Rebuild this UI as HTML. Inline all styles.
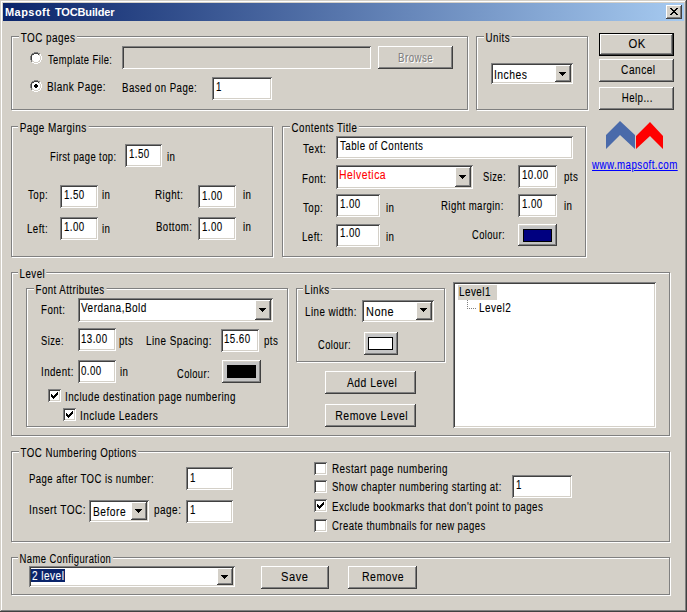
<!DOCTYPE html>
<html><head><meta charset="utf-8"><style>*{margin:0;padding:0;box-sizing:border-box}
html,body{width:687px;height:612px;overflow:hidden}
body{background:#D4D0C8;position:relative;font-family:"Liberation Sans",sans-serif;font-size:12px;color:#000}
.a{position:absolute}
.t{position:absolute;white-space:nowrap;line-height:13px;font-size:12px;transform-origin:0 0;letter-spacing:0.55px;-webkit-text-stroke-width:0.1px}
.c{position:absolute;white-space:nowrap;line-height:13px;font-size:12px;text-align:center}
.c span{display:inline-block;transform:scaleX(0.8099);transform-origin:50% 0;letter-spacing:0.55px;-webkit-text-stroke-width:0.1px}
.tb{position:absolute;white-space:nowrap;line-height:13px;font-size:11px;font-weight:bold;color:#fff;letter-spacing:0.15px}
.grp{position:absolute;border:1px solid #808080;box-shadow:inset 1px 1px 0 #fff,1px 1px 0 #fff}
.gl{position:absolute;background:#D4D0C8;padding:0 2px;line-height:13px;white-space:nowrap;font-size:12px;transform-origin:0 0;letter-spacing:0.55px;-webkit-text-stroke-width:0.1px}
.edit{position:absolute;background:#fff;box-shadow:inset 1px 1px 0 #808080,inset -1px -1px 0 #fff,inset 2px 2px 0 #404040,inset -2px -2px 0 #D4D0C8}
.btn{position:absolute;background:#D4D0C8;box-shadow:inset -1px -1px 0 #404040,inset 1px 1px 0 #fff,inset -2px -2px 0 #808080,inset 2px 2px 0 #D4D0C8}
.btn.def{box-shadow:inset 0 0 0 1px #000,inset -2px -2px 0 #404040,inset 2px 2px 0 #fff,inset -3px -3px 0 #808080}
.chk{position:absolute;background:#fff;box-shadow:inset 1px 1px 0 #808080,inset -1px -1px 0 #fff,inset 2px 2px 0 #404040,inset -2px -2px 0 #D4D0C8}
</style></head><body>
<div class="a" style="left:0;top:0;width:687px;height:612px;box-shadow:inset -1px -1px 0 #404040,inset 1px 1px 0 #D4D0C8,inset -2px -2px 0 #808080,inset 2px 2px 0 #fff"></div>
<div class="a" style="left:3px;top:3px;width:681px;height:18px;background:linear-gradient(to right,#0A246A,#A6CAF0)"></div>
<div class="tb" style="left:5px;top:6px;letter-spacing:0.45px">Mapsoft</div>
<div class="tb" style="left:55px;top:6px;letter-spacing:-0.15px">TOCBuilder</div>
<div class="btn" style="left:666px;top:5px;width:16px;height:14px;"></div>
<svg class="a" style="left:670px;top:8px" width="8" height="7" shape-rendering="crispEdges"><path d="M0 0h2v1h1v1h2v-1h1v-1h2v1h-1v1h-1v1h-1v1h1v1h1v1h1v1h-2v-1h-1v-1h-2v1h-1v1h-2v-1h1v-1h1v-1h1v-1h-1v-1h-1v-1h-1z" fill="#000"/></svg>
<div class="grp" style="left:11px;top:36px;width:457px;height:74px"></div>
<div class="gl" style="left:19px;top:32px;transform:scaleX(0.8281);">TOC pages</div>
<svg class="a" style="left:30px;top:52px" width="12" height="12" shape-rendering="crispEdges"><path d="M4 2h4v1h1v1h1v4h-1v1h-1v1h-4v-1h-1v-1h-1v-4h1v-1h1z" fill="#fff"/><path d="M4 0h4v1h-4zM2 1h2v1h-2zM8 1h2v1h-2zM1 2h1v2h-1zM0 4h1v4h-1zM1 8h1v2h-1z" fill="#808080"/><path d="M4 1h4v1h-4zM2 2h2v1h-2zM8 2h2v1h-2zM1 3h1v1h-1zM1 4h1v4h-1z" fill="#404040"/><path d="M10 2h1v2h-1zM11 4h1v4h-1zM10 8h1v2h-1zM8 10h2v1h-2zM4 11h4v1h-4zM2 10h2v1h-2z" fill="#fff"/><path d="M10 4h1v4h-1zM9 8h1v1h-1zM8 9h1v1h-1zM4 10h4v1h-4zM2 9h1v1h-1zM9 2h1v1h-1zM3 9h1v1h-1z" fill="#D4D0C8"/></svg>
<div class="t" style="left:48px;top:54px;transform:scaleX(0.7817);">Template File:</div>
<div class="edit" style="left:122px;top:46px;width:249px;height:23px;background:#D4D0C8"></div>
<div class="btn" style="left:378px;top:46px;width:75px;height:23px;"></div>
<div class="c" style="left:379px;top:53px;width:75px;color:#fff"><span style="transform:scaleX(0.8099);">Browse</span></div>
<div class="c" style="left:378px;top:52px;width:75px;color:#808080"><span style="transform:scaleX(0.8099);">Browse</span></div>
<svg class="a" style="left:30px;top:80px" width="12" height="12" shape-rendering="crispEdges"><path d="M4 2h4v1h1v1h1v4h-1v1h-1v1h-4v-1h-1v-1h-1v-4h1v-1h1z" fill="#fff"/><path d="M4 0h4v1h-4zM2 1h2v1h-2zM8 1h2v1h-2zM1 2h1v2h-1zM0 4h1v4h-1zM1 8h1v2h-1z" fill="#808080"/><path d="M4 1h4v1h-4zM2 2h2v1h-2zM8 2h2v1h-2zM1 3h1v1h-1zM1 4h1v4h-1z" fill="#404040"/><path d="M10 2h1v2h-1zM11 4h1v4h-1zM10 8h1v2h-1zM8 10h2v1h-2zM4 11h4v1h-4zM2 10h2v1h-2z" fill="#fff"/><path d="M10 4h1v4h-1zM9 8h1v1h-1zM8 9h1v1h-1zM4 10h4v1h-4zM2 9h1v1h-1zM9 2h1v1h-1zM3 9h1v1h-1z" fill="#D4D0C8"/><path d="M5 4h2v1h1v2h-1v1h-2v-1h-1v-2h1z" fill="#000"/></svg>
<div class="t" style="left:47px;top:81px;transform:scaleX(0.8327);">Blank Page:</div>
<div class="t" style="left:122px;top:82px;transform:scaleX(0.8081);">Based on Page:</div>
<div class="edit" style="left:212px;top:77px;width:60px;height:23px;"></div>
<div class="t" style="left:216px;top:81px;transform:scaleX(0.8099);">1</div>
<div class="grp" style="left:476px;top:36px;width:112px;height:74px"></div>
<div class="gl" style="left:484px;top:32px;transform:scaleX(0.8099);">Units</div>
<div class="edit" style="left:491px;top:63px;width:82px;height:21px;"></div>
<div class="btn" style="left:555px;top:65px;width:16px;height:17px;"></div>
<svg class="a" style="left:559px;top:72px" width="7" height="4" shape-rendering="crispEdges"><path d="M0 0h7v1h-1v1h-1v1h-1v1h-1v-1h-1v-1h-1v-1h-1z" fill="#000"/></svg>
<div class="t" style="left:494px;top:69px;transform:scaleX(0.8645);">Inches</div>
<div class="btn def" style="left:599px;top:33px;width:75px;height:23px;"></div>
<div class="c" style="left:600px;top:38px;width:75px;"><span style="transform:scaleX(0.9373);">OK</span></div>
<div class="btn" style="left:599px;top:59px;width:75px;height:23px;"></div>
<div class="c" style="left:601px;top:64px;width:75px;"><span style="transform:scaleX(0.8463);">Cancel</span></div>
<div class="btn" style="left:599px;top:87px;width:75px;height:23px;"></div>
<div class="c" style="left:600px;top:92px;width:75px;"><span style="transform:scaleX(0.8099);">Help...</span></div>
<svg class="a" style="left:600px;top:118px" width="70" height="36"><polygon points="6,17 20,3 35,17 35,31 20,17 6,31" fill="#4A6AAA"/><polygon points="36,18 50,4 63,18 63,31 50,18 36,31" fill="#FF0000"/></svg>
<div class="t" style="left:592px;top:159px;color:#0000FF;transform:scaleX(0.8117)"><u>www.mapsoft.com</u></div>
<div class="grp" style="left:11px;top:126px;width:262px;height:131px"></div>
<div class="gl" style="left:18px;top:122px;transform:scaleX(0.8317);">Page Margins</div>
<div class="t" style="left:50px;top:151px;transform:scaleX(0.7826);">First page top:</div>
<div class="edit" style="left:125px;top:144px;width:37px;height:23px;"></div>
<div class="t" style="left:129px;top:148px;transform:scaleX(0.8099);">1.50</div>
<div class="t" style="left:167px;top:151px;transform:scaleX(0.8099);">in</div>
<div class="t" style="left:28px;top:189px;transform:scaleX(0.8099);">Top:</div>
<div class="edit" style="left:60px;top:185px;width:38px;height:23px;"></div>
<div class="t" style="left:64px;top:189px;transform:scaleX(0.8099);">1.50</div>
<div class="t" style="left:102px;top:189px;transform:scaleX(0.8099);">in</div>
<div class="t" style="left:27px;top:223px;transform:scaleX(0.8099);">Left:</div>
<div class="edit" style="left:60px;top:217px;width:38px;height:23px;"></div>
<div class="t" style="left:64px;top:221px;transform:scaleX(0.8099);">1.00</div>
<div class="t" style="left:102px;top:223px;transform:scaleX(0.8099);">in</div>
<div class="t" style="left:155px;top:189px;transform:scaleX(0.8217);">Right:</div>
<div class="edit" style="left:198px;top:185px;width:38px;height:23px;"></div>
<div class="t" style="left:202px;top:190px;transform:scaleX(0.8099);">1.00</div>
<div class="t" style="left:243px;top:189px;transform:scaleX(0.8099);">in</div>
<div class="t" style="left:156px;top:221px;transform:scaleX(0.8026);">Bottom:</div>
<div class="edit" style="left:198px;top:217px;width:38px;height:23px;"></div>
<div class="t" style="left:202px;top:221px;transform:scaleX(0.8099);">1.00</div>
<div class="t" style="left:243px;top:221px;transform:scaleX(0.8099);">in</div>
<div class="grp" style="left:282px;top:126px;width:304px;height:131px"></div>
<div class="gl" style="left:290px;top:122px;transform:scaleX(0.8099);">Contents Title</div>
<div class="t" style="left:303px;top:143px;transform:scaleX(0.8263);">Text:</div>
<div class="edit" style="left:336px;top:136px;width:237px;height:23px;"></div>
<div class="t" style="left:340px;top:140px;transform:scaleX(0.8117);">Table of Contents</div>
<div class="t" style="left:302px;top:173px;transform:scaleX(0.8099);">Font:</div>
<div class="edit" style="left:336px;top:165px;width:137px;height:24px;"></div>
<div class="btn" style="left:455px;top:167px;width:16px;height:20px;"></div>
<svg class="a" style="left:459px;top:175px" width="7" height="4" shape-rendering="crispEdges"><path d="M0 0h7v1h-1v1h-1v1h-1v1h-1v-1h-1v-1h-1v-1h-1z" fill="#000"/></svg>
<div class="t" style="left:339px;top:169px;transform:scaleX(0.8672);color:#FF0000">Helvetica</div>
<div class="t" style="left:483px;top:171px;transform:scaleX(0.779);">Size:</div>
<div class="edit" style="left:518px;top:165px;width:39px;height:23px;"></div>
<div class="t" style="left:522px;top:169px;transform:scaleX(0.8099);">10.00</div>
<div class="t" style="left:564px;top:171px;transform:scaleX(0.8099);">pts</div>
<div class="t" style="left:303px;top:202px;transform:scaleX(0.8099);">Top:</div>
<div class="edit" style="left:336px;top:194px;width:44px;height:23px;"></div>
<div class="t" style="left:340px;top:198px;transform:scaleX(0.8099);">1.00</div>
<div class="t" style="left:386px;top:202px;transform:scaleX(0.8099);">in</div>
<div class="t" style="left:302px;top:231px;transform:scaleX(0.8099);">Left:</div>
<div class="edit" style="left:336px;top:224px;width:44px;height:23px;"></div>
<div class="t" style="left:340px;top:227px;transform:scaleX(0.8099);">1.00</div>
<div class="t" style="left:386px;top:231px;transform:scaleX(0.8099);">in</div>
<div class="t" style="left:441px;top:200px;transform:scaleX(0.799);">Right margin:</div>
<div class="edit" style="left:518px;top:194px;width:39px;height:23px;"></div>
<div class="t" style="left:522px;top:198px;transform:scaleX(0.8099);">1.00</div>
<div class="t" style="left:564px;top:200px;transform:scaleX(0.8099);">in</div>
<div class="t" style="left:472px;top:229px;transform:scaleX(0.7744);">Colour:</div>
<div class="btn" style="left:518px;top:224px;width:39px;height:22px;background:#C4C4C4"></div>
<div class="a" style="left:523px;top:229px;width:29px;height:13px;background:#000080;border:1px solid #000"></div>
<div class="grp" style="left:11px;top:272px;width:659px;height:164px"></div>
<div class="gl" style="left:18px;top:268px;transform:scaleX(0.8099);">Level</div>
<div class="grp" style="left:26px;top:288px;width:262px;height:139px"></div>
<div class="gl" style="left:34px;top:284px;transform:scaleX(0.8063);">Font Attributes</div>
<div class="t" style="left:41px;top:304px;transform:scaleX(0.8099);">Font:</div>
<div class="edit" style="left:78px;top:298px;width:195px;height:24px;"></div>
<div class="btn" style="left:255px;top:300px;width:16px;height:20px;"></div>
<svg class="a" style="left:259px;top:308px" width="7" height="4" shape-rendering="crispEdges"><path d="M0 0h7v1h-1v1h-1v1h-1v1h-1v-1h-1v-1h-1v-1h-1z" fill="#000"/></svg>
<div class="t" style="left:81px;top:302px;transform:scaleX(0.8372);">Verdana,Bold</div>
<div class="t" style="left:41px;top:335px;transform:scaleX(0.779);">Size:</div>
<div class="edit" style="left:78px;top:328px;width:38px;height:23px;"></div>
<div class="t" style="left:81px;top:333px;transform:scaleX(0.8099);">13.00</div>
<div class="t" style="left:119px;top:335px;transform:scaleX(0.8099);">pts</div>
<div class="t" style="left:146px;top:335px;transform:scaleX(0.8254);">Line Spacing:</div>
<div class="edit" style="left:221px;top:329px;width:38px;height:23px;"></div>
<div class="t" style="left:224px;top:333px;transform:scaleX(0.8099);">15.60</div>
<div class="t" style="left:264px;top:335px;transform:scaleX(0.8099);">pts</div>
<div class="t" style="left:41px;top:366px;transform:scaleX(0.8099);">Indent:</div>
<div class="edit" style="left:78px;top:360px;width:38px;height:23px;"></div>
<div class="t" style="left:81px;top:365px;transform:scaleX(0.8099);">0.00</div>
<div class="t" style="left:120px;top:366px;transform:scaleX(0.8099);">in</div>
<div class="t" style="left:177px;top:368px;transform:scaleX(0.7744);">Colour:</div>
<div class="btn" style="left:222px;top:360px;width:39px;height:23px;background:#C4C4C4"></div>
<div class="a" style="left:227px;top:365px;width:29px;height:13px;background:#000;border:1px solid #000"></div>
<div class="chk" style="left:48px;top:389px;width:13px;height:13px;"></div>
<svg class="a" style="left:48px;top:389px" width="13" height="13" shape-rendering="crispEdges"><path d="M9 3h1v1h-1zM8 4h1v1h-1zM9 4h1v1h-1zM3 5h1v1h-1zM7 5h1v1h-1zM8 5h1v1h-1zM9 5h1v1h-1zM3 6h1v1h-1zM4 6h1v1h-1zM6 6h1v1h-1zM7 6h1v1h-1zM8 6h1v1h-1zM3 7h1v1h-1zM4 7h1v1h-1zM5 7h1v1h-1zM6 7h1v1h-1zM7 7h1v1h-1zM4 8h1v1h-1zM5 8h1v1h-1zM6 8h1v1h-1zM5 9h1v1h-1z" fill="#000"/></svg>
<div class="t" style="left:65px;top:391px;transform:scaleX(0.8181);">Include destination page numbering</div>
<div class="chk" style="left:63px;top:408px;width:13px;height:13px;"></div>
<svg class="a" style="left:63px;top:408px" width="13" height="13" shape-rendering="crispEdges"><path d="M9 3h1v1h-1zM8 4h1v1h-1zM9 4h1v1h-1zM3 5h1v1h-1zM7 5h1v1h-1zM8 5h1v1h-1zM9 5h1v1h-1zM3 6h1v1h-1zM4 6h1v1h-1zM6 6h1v1h-1zM7 6h1v1h-1zM8 6h1v1h-1zM3 7h1v1h-1zM4 7h1v1h-1zM5 7h1v1h-1zM6 7h1v1h-1zM7 7h1v1h-1zM4 8h1v1h-1zM5 8h1v1h-1zM6 8h1v1h-1zM5 9h1v1h-1z" fill="#000"/></svg>
<div class="t" style="left:80px;top:410px;transform:scaleX(0.8354);">Include Leaders</div>
<div class="grp" style="left:296px;top:288px;width:149px;height:74px"></div>
<div class="gl" style="left:303px;top:284px;transform:scaleX(0.8099);">Links</div>
<div class="t" style="left:305px;top:306px;transform:scaleX(0.8172);">Line width:</div>
<div class="edit" style="left:362px;top:300px;width:72px;height:22px;"></div>
<div class="btn" style="left:416px;top:302px;width:16px;height:18px;"></div>
<svg class="a" style="left:420px;top:308px" width="7" height="4" shape-rendering="crispEdges"><path d="M0 0h7v1h-1v1h-1v1h-1v1h-1v-1h-1v-1h-1v-1h-1z" fill="#000"/></svg>
<div class="t" style="left:366px;top:306px;transform:scaleX(0.91);">None</div>
<div class="t" style="left:318px;top:339px;transform:scaleX(0.7744);">Colour:</div>
<div class="btn" style="left:364px;top:332px;width:34px;height:23px;background:#C4C4C4"></div>
<div class="a" style="left:368px;top:337px;width:25px;height:13px;background:#fff;border:1px solid #000"></div>
<div class="btn" style="left:325px;top:371px;width:91px;height:23px;"></div>
<div class="c" style="left:327px;top:377px;width:91px;"><span style="transform:scaleX(0.8645);">Add Level</span></div>
<div class="btn" style="left:325px;top:404px;width:91px;height:23px;"></div>
<div class="c" style="left:326px;top:410px;width:91px;"><span style="transform:scaleX(0.8736);">Remove Level</span></div>
<div class="edit" style="left:453px;top:282px;width:203px;height:146px;"></div>
<div class="a" style="left:458px;top:285px;width:39px;height:15px;background:#D4D0C8"></div>
<div class="t" style="left:459px;top:286px;transform:scaleX(0.8272);">Level1</div>
<svg class="a" style="left:467px;top:300px" width="10" height="10" shape-rendering="crispEdges"><path d="M0 0h1v1h-1zM0 2h1v1h-1zM0 4h1v1h-1zM0 6h1v1h-1zM0 8h1v1h-1zM2 8h1v1h-1zM4 8h1v1h-1zM6 8h1v1h-1zM8 8h1v1h-1z" fill="#808080"/></svg>
<div class="t" style="left:479px;top:302px;transform:scaleX(0.8327);">Level2</div>
<div class="grp" style="left:11px;top:451px;width:659px;height:91px"></div>
<div class="gl" style="left:19px;top:447px;transform:scaleX(0.8099);">TOC Numbering Options</div>
<div class="t" style="left:29px;top:473px;transform:scaleX(0.7981);">Page after TOC is number:</div>
<div class="edit" style="left:186px;top:467px;width:47px;height:23px;"></div>
<div class="t" style="left:190px;top:472px;transform:scaleX(0.8099);">1</div>
<div class="t" style="left:29px;top:504px;transform:scaleX(0.8445);">Insert TOC:</div>
<div class="edit" style="left:89px;top:500px;width:60px;height:22px;"></div>
<div class="btn" style="left:131px;top:502px;width:16px;height:18px;"></div>
<svg class="a" style="left:135px;top:509px" width="7" height="4" shape-rendering="crispEdges"><path d="M0 0h7v1h-1v1h-1v1h-1v1h-1v-1h-1v-1h-1v-1h-1z" fill="#000"/></svg>
<div class="t" style="left:93px;top:506px;transform:scaleX(0.8554);">Before</div>
<div class="t" style="left:154px;top:504px;transform:scaleX(0.8354);">page:</div>
<div class="edit" style="left:186px;top:500px;width:47px;height:23px;"></div>
<div class="t" style="left:190px;top:504px;transform:scaleX(0.8099);">1</div>
<div class="chk" style="left:314px;top:462px;width:13px;height:13px;"></div>
<div class="t" style="left:332px;top:463px;transform:scaleX(0.8226);">Restart page numbering</div>
<div class="chk" style="left:314px;top:480px;width:13px;height:13px;"></div>
<div class="t" style="left:332px;top:481px;transform:scaleX(0.8008);">Show chapter numbering starting at:</div>
<div class="edit" style="left:512px;top:475px;width:60px;height:23px;"></div>
<div class="t" style="left:516px;top:479px;transform:scaleX(0.8099);">1</div>
<div class="chk" style="left:314px;top:499px;width:13px;height:13px;"></div>
<svg class="a" style="left:314px;top:499px" width="13" height="13" shape-rendering="crispEdges"><path d="M9 3h1v1h-1zM8 4h1v1h-1zM9 4h1v1h-1zM3 5h1v1h-1zM7 5h1v1h-1zM8 5h1v1h-1zM9 5h1v1h-1zM3 6h1v1h-1zM4 6h1v1h-1zM6 6h1v1h-1zM7 6h1v1h-1zM8 6h1v1h-1zM3 7h1v1h-1zM4 7h1v1h-1zM5 7h1v1h-1zM6 7h1v1h-1zM7 7h1v1h-1zM4 8h1v1h-1zM5 8h1v1h-1zM6 8h1v1h-1zM5 9h1v1h-1z" fill="#000"/></svg>
<div class="t" style="left:332px;top:501px;transform:scaleX(0.8145);">Exclude bookmarks that don't point to pages</div>
<div class="chk" style="left:314px;top:519px;width:13px;height:13px;"></div>
<div class="t" style="left:332px;top:520px;transform:scaleX(0.7963);">Create thumbnails for new pages</div>
<div class="grp" style="left:11px;top:557px;width:659px;height:38px"></div>
<div class="gl" style="left:18px;top:553px;transform:scaleX(0.7862);">Name Configuration</div>
<div class="edit" style="left:29px;top:566px;width:206px;height:21px;"></div>
<div class="btn" style="left:217px;top:568px;width:16px;height:17px;"></div>
<svg class="a" style="left:221px;top:575px" width="7" height="4" shape-rendering="crispEdges"><path d="M0 0h7v1h-1v1h-1v1h-1v1h-1v-1h-1v-1h-1v-1h-1z" fill="#000"/></svg>
<div class="a" style="left:31px;top:569px;width:34px;height:13px;background:#0A246A"></div>
<div class="t" style="left:32px;top:570px;transform:scaleX(0.8408);color:#fff;">2 level</div>
<div class="btn" style="left:261px;top:566px;width:68px;height:23px;"></div>
<div class="c" style="left:261px;top:571px;width:68px;"><span style="transform:scaleX(0.9282);">Save</span></div>
<div class="btn" style="left:348px;top:566px;width:69px;height:23px;"></div>
<div class="c" style="left:348px;top:571px;width:69px;"><span style="transform:scaleX(0.8736);">Remove</span></div>
</body></html>
